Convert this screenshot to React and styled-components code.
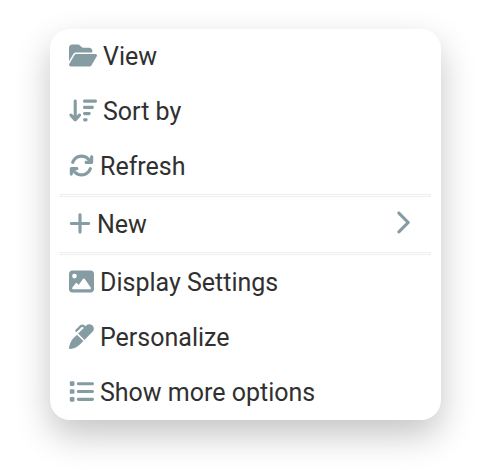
import React from "react";
import styled, { createGlobalStyle } from "styled-components";
import {
  FaFolderOpen,
  FaArrowDownWideShort,
  FaArrowsRotate,
  FaPlus,
  FaImage,
  FaMarker,
  FaList,
  FaChevronRight,
} from "react-icons/fa6";

const GlobalStyle = createGlobalStyle`
  *, *::before, *::after { box-sizing: border-box; }
  body {
    margin: 0;
    background: #fff;
    color: #303030;
    font-family: Roboto, sans-serif;
  }
`;

const Page = styled.main`
  padding: 29px 53px 50px 50px;
`;

const Menu = styled.div`
  padding: 0 10px;
  border-radius: 20px;
  background: #fff;
  box-shadow: 0 15px 35px rgba(0, 0, 0, 0.23);
`;

const Item = styled.button`
  display: flex;
  align-items: flex-start;
  gap: 6px;
  width: 100%;
  padding: 13px 21px 12px 9px;
  border: 0;
  background: transparent;
  color: inherit;
  font: 400 25px/30px Roboto, sans-serif;
  text-align: left;
  cursor: pointer;
`;

const Icon = styled.span`
  display: flex;
  flex: none;
  align-items: center;
  width: ${({ $width }) => $width}px;
  height: 27px;
  color: #869ca3;

  svg {
    width: 100%;
    height: 25px;
  }
`;

const SubmenuArrow = styled(Icon)`
  height: 25px;
`;

const Label = styled.span`
  flex: 1;
`;

const Divider = styled.hr`
  height: 3px;
  margin: 0;
  border: 1px solid #eee;
`;

const groups = [
  [
    { label: "View", Glyph: FaFolderOpen, width: 28 },
    { label: "Sort by", Glyph: FaArrowDownWideShort, width: 28 },
    { label: "Refresh", Glyph: FaArrowsRotate, width: 25 },
  ],
  [{ label: "New", Glyph: FaPlus, width: 22, submenu: true }],
  [
    { label: "Display Settings", Glyph: FaImage, width: 25 },
    { label: "Personalize", Glyph: FaMarker, width: 25 },
    { label: "Show more options", Glyph: FaList, width: 25 },
  ],
];

export default function App() {
  return (
    <>
      <GlobalStyle />
      <Page>
        <Menu role="menu">
          {groups.map((items, index) => (
            <React.Fragment key={items[0].label}>
              {index > 0 && <Divider />}
              {items.map(({ label, Glyph, width, submenu }) => (
                <Item key={label} type="button" role="menuitem" aria-haspopup={submenu}>
                  <Icon $width={width} aria-hidden="true">
                    <Glyph />
                  </Icon>
                  <Label>{label}</Label>
                  {submenu && (
                    <SubmenuArrow $width={16} aria-hidden="true">
                      <FaChevronRight />
                    </SubmenuArrow>
                  )}
                </Item>
              ))}
            </React.Fragment>
          ))}
        </Menu>
      </Page>
    </>
  );
}
